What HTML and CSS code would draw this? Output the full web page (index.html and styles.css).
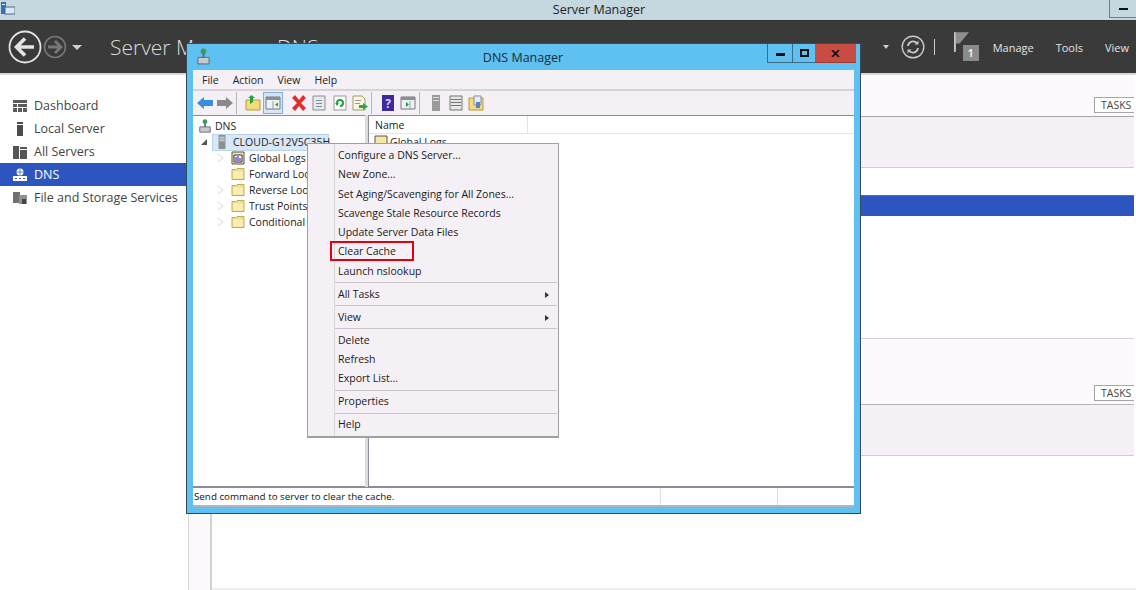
FILE: index.html
```html
<!DOCTYPE html>
<html lang="en">
<head>
<meta charset="utf-8">
<title>Server Manager</title>
<link rel="stylesheet" href="styles.css">
</head>
<body>
<div class="desktop">
  <div class="osbar">
    <svg class="osicon" viewBox="0 0 14 14"><rect x="0" y="1" width="5" height="12" fill="#2f6fc4"/><rect x="4" y="6" width="10" height="7" fill="#dfe8ee" stroke="#4a6a90"/><rect x="1" y="3" width="3" height="1" fill="#fff"/></svg>
    <span class="ostitle">Server Manager</span>
    <span class="osmin"><i></i></span>
  </div>

  <header class="smhead">
    <svg class="nav-back" viewBox="0 0 34 34"><circle cx="17" cy="17" r="15.5" fill="none" stroke="#e4e4e4" stroke-width="1.8"/><path d="M8 17h18M17 8.500 8.500 17l8.500 8.500" fill="none" stroke="#e4e4e4" stroke-width="3.600"/></svg>
    <svg class="nav-fwd" viewBox="0 0 24 24"><circle cx="12" cy="12" r="10.500" fill="none" stroke="#777" stroke-width="1.600"/><path d="M5 12h13M12 6l6 6-6 6" fill="none" stroke="#777" stroke-width="2.800"/></svg>
    <span class="caret"></span>
    <span class="crumb">Server Manager</span>
    <span class="crumb-dns">DNS</span>
    <span class="caret caret-small"></span>
    <svg class="refresh" viewBox="0 0 24 24"><circle cx="12" cy="12" r="10.800" fill="none" stroke="#c8c8c8" stroke-width="1.400"/><path d="M7 11a5 5 0 0 1 9-2.500M17 13a5 5 0 0 1-9 2.500" fill="none" stroke="#c8c8c8" stroke-width="1.800"/><path d="M17.500 5.500v4h-4zM6.500 18.500v-4h4z" fill="#c8c8c8"/></svg>
    <span class="vsep"></span>
    <span class="flag">
      <svg viewBox="0 0 16 21" class="flag-svg"><rect x="0" y="0" width="2" height="21" fill="#c8c8c8"/><path d="M2 0h14L6 12H2z" fill="#8f8f8f"/></svg>
      <span class="badge">1</span>
    </span>
    <span class="hmenu hm-manage">Manage</span>
    <span class="hmenu hm-tools">Tools</span>
    <span class="hmenu hm-view">View</span>
  </header>

  <div class="smbody">
    <aside class="side">
      <div class="nav-item"><svg class="nav-ic" viewBox="0 0 14 14"><path d="M0 1h14v3H0zM0 5h4v3H0zM5 5h9v3H5zM0 9h4v4H0zM5 9h4v4H5zM10 9h4v4h-4z" fill="#5c5c5c"/></svg>Dashboard</div>
      <div class="nav-item"><svg class="nav-ic" viewBox="0 0 14 14"><path d="M4 0h6v2H4zM4 3h6v11H4z" fill="#4c4c4c"/></svg>Local Server</div>
      <div class="nav-item"><svg class="nav-ic" viewBox="0 0 14 14"><path d="M0 1h6v13H0zM7 2h7v2H7zM7 5h7v9H7z" fill="#555"/></svg>All Servers</div>
      <div class="nav-item nav-on"><svg class="nav-ic" viewBox="0 0 14 14"><circle cx="7" cy="4" r="3.500" fill="#fff"/><path d="M7 1v6M3.500 4h7" stroke="#2d55c0" stroke-width=".7"/><path d="M0 8h14v5H0z" fill="#fff"/><path d="M2 10h2v1H2zM6 10h2v1H6zM10 10h2v1h-2z" fill="#2d55c0"/></svg>DNS</div>
      <div class="nav-item"><svg class="nav-ic" viewBox="0 0 14 14"><path d="M0 1h7v11H0z" fill="#707070"/><path d="M6 4h8v9H6z" fill="#909090"/><path d="M9 8h4v5H9z" fill="#444"/></svg>File and Storage Services<span class="nav-more"></span></div>
    </aside>
    <div class="strip"></div>
    <main class="content">
      <section class="band band-head"><span class="tasks">TASKS</span></section>
      <section class="tile"></section>
      <section class="rows">
        <div class="row-gap"></div>
        <div class="row-sel"></div>
      </section>
      <section class="band band-head band-second"><span class="tasks">TASKS</span></section>
      <section class="tile"></section>
      <section class="rest"></section>
    </main>
  </div>

  <div class="window">
    <div class="wintitle">
      <svg class="win-ic" viewBox="0 0 14 18"><circle cx="7" cy="3.500" r="3" fill="#3f9a5a"/><path d="M6 6h2v4H6z" fill="#667"/><path d="M1 10h12v7H1z" fill="#c5c9d0" stroke="#5f6670"/></svg>
      <span class="wintext">DNS Manager</span>
      <div class="winbtns">
        <span class="wb wb-min"><i></i></span>
        <span class="wb wb-max"><i></i></span>
        <span class="wb wb-close"><svg viewBox="0 0 10 8"><path d="M1 0l8 8M9 0L1 8" stroke="#111" stroke-width="2"/></svg></span>
      </div>
    </div>

    <div class="menubar"><span>File</span><span>Action</span><span>View</span><span>Help</span></div>

    <div class="toolbar">
      <span class="tb"><svg viewBox="0 0 16 16"><path d="M0 8l7-6v3h9v6H7v3z" fill="#3a8ede"/></svg></span>
      <span class="tb"><svg viewBox="0 0 16 16"><path d="M16 8L9 2v3H0v6h9v3z" fill="#8a8a8a"/></svg></span>
      <span class="tsep"></span>
      <span class="tb"><svg viewBox="0 0 16 16"><path d="M1 5h14v10H1z" fill="#f3dc7e" stroke="#b59a3c"/><path d="M5 9V3H3l3.500-3L10 3H8v4z" fill="#1fa33a"/></svg></span>
      <span class="tb tb-on"><svg viewBox="0 0 16 16"><path d="M1 2h14v12H1z" fill="#eef2f6" stroke="#777"/><path d="M1 2h14v3H1z" fill="#8a8f96"/><path d="M8 6v8" stroke="#999"/><path d="M13 7.500v4l-3-2z" fill="#1c9a3c"/></svg></span>
      <span class="tb tb-del"><svg viewBox="0 0 16 16"><path d="M1 3l3-3 4 5 4-5 3 3-5 5 5 5-3 3-4-5-4 5-3-3 5-5z" fill="#e22b2b"/></svg></span>
      <span class="tb"><svg viewBox="0 0 16 16"><path d="M2 1h12v14H2z" fill="#e8e8e8" stroke="#8f8f8f"/><path d="M5 5h6v1H5zM5 8h6v1H5zM5 11h6v1H5z" fill="#7090b8"/></svg></span>
      <span class="tb tb-ref"><svg viewBox="0 0 16 16"><path d="M2 1h12v14H2z" fill="#fff" stroke="#999"/><path d="M5 8a3 3 0 1 1 3 3" fill="none" stroke="#1fa33a" stroke-width="2"/><path d="M3 8h4l-2 3z" fill="#1fa33a"/></svg></span>
      <span class="tb"><svg viewBox="0 0 16 16"><path d="M1 1h9l3 3v11H1z" fill="#fdf8e0" stroke="#a09a70"/><path d="M3 5h6v1H3zM3 8h5v1H3z" fill="#999"/><path d="M7 10h4V8l5 3.500-5 3.500v-2H7z" fill="#2aa846"/></svg></span>
      <span class="tsep"></span>
      <span class="tb"><svg viewBox="0 0 16 16"><path d="M2 0h12v16H2z" fill="#3c2a9c"/><text x="8" y="13" class="tb-q">?</text></svg></span>
      <span class="tb"><svg viewBox="0 0 16 16"><path d="M1 2h14v12H1z" fill="#eef2f6" stroke="#777"/><path d="M1 2h14v3H1z" fill="#8a8f96"/><path d="M10 6v8" stroke="#999"/><path d="M6 7v5l3-2.500z" fill="#1c9a3c"/></svg></span>
      <span class="tsep"></span>
      <span class="tb"><svg viewBox="0 0 16 16"><path d="M4 0h8v16H4z" fill="#9a9a9a"/><path d="M5 2h6v1H5zM5 5h6v1H5z" fill="#ddd"/></svg></span>
      <span class="tb"><svg viewBox="0 0 16 16"><path d="M2 1h12v14H2z" fill="#e5e5e5" stroke="#777"/><path d="M3 4h10v1H3zM3 7h10v1H3zM3 10h10v1H3z" fill="#777"/></svg></span>
      <span class="tb"><svg viewBox="0 0 16 16"><path d="M1 3h14v12H1z" fill="#f3dc7e" stroke="#b59a3c"/><path d="M6 1h7v9H6z" fill="#e8eef6" stroke="#7f8fa8"/><path d="M8 7h4v6H8z" fill="#5f82c0"/></svg></span>
    </div>

    <div class="panes">
      <div class="tree">
        <div class="tr tr-root"><svg class="tr-ic" viewBox="0 0 14 16"><circle cx="7" cy="3" r="2.800" fill="#3f9a5a"/><path d="M6 5h2v4H6z" fill="#667"/><path d="M1 9h12v6H1z" fill="#c5c9d0" stroke="#5f6670"/></svg><span>DNS</span></div>
        <div class="tr tr-srv"><span class="exp-open"></span><span class="srv-sel"><svg class="tr-ic srv-ic" viewBox="0 0 10 16"><path d="M1 0h8v16H1z" fill="#8c9096"/><path d="M2 2h6v1H2zM2 4h6v1H2zM2 6h6v1H2z" fill="#d8dadd"/><path d="M6 13h2v2H6z" fill="#4fc04f"/></svg><span>CLOUD-G12V5C35H</span></span></div>
        <div class="tr tr-sub"><span class="exp"></span><svg class="tr-ic" viewBox="0 0 14 14"><path d="M1 1h12v12H1z" fill="#f6e7a8" stroke="#555"/><path d="M3 4h8v7H3z" fill="#fff" stroke="#333"/><path d="M5 6v4M7 5v5M9 7v3" stroke="#5030c0" stroke-width="1.200"/></svg><span>Global Logs</span></div>
        <div class="tr tr-sub"><span class="exp exp-none"></span><svg class="tr-ic" viewBox="0 0 14 13"><use href="#folder"/></svg><span>Forward Lookup Zones</span></div>
        <div class="tr tr-sub"><span class="exp"></span><svg class="tr-ic" viewBox="0 0 14 13"><use href="#folder"/></svg><span>Reverse Lookup Zones</span></div>
        <div class="tr tr-sub"><span class="exp"></span><svg class="tr-ic" viewBox="0 0 14 13"><use href="#folder"/></svg><span>Trust Points</span></div>
        <div class="tr tr-sub"><span class="exp"></span><svg class="tr-ic" viewBox="0 0 14 13"><use href="#folder"/></svg><span>Conditional Forwarders</span></div>
      </div>
      <div class="split"></div>
      <div class="detail">
        <div class="colhead"><span class="colname">Name</span></div>
        <div class="drow"><svg class="tr-ic" viewBox="0 0 14 14"><path d="M1 1h12v12H1z" fill="#f6e7a8" stroke="#555"/></svg><span>Global Logs</span></div>
      </div>
    </div>

    <div class="status">
      <span class="st-main">Send command to server to clear the cache.</span>
      <span class="st-cell st-mid"></span>
      <span class="st-cell st-end"></span>
    </div>

    <div class="ctx">
      <div class="mi">Configure a DNS Server...</div>
      <div class="mi">New Zone...</div>
      <div class="mi">Set Aging/Scavenging for All Zones...</div>
      <div class="mi">Scavenge Stale Resource Records</div>
      <div class="mi">Update Server Data Files</div>
      <div class="mi mi-mark">Clear Cache<span class="redbox"></span></div>
      <div class="mi">Launch nslookup</div>
      <div class="ms"></div>
      <div class="mi mi-sub">All Tasks</div>
      <div class="ms"></div>
      <div class="mi mi-sub">View</div>
      <div class="ms"></div>
      <div class="mi">Delete</div>
      <div class="mi">Refresh</div>
      <div class="mi">Export List...</div>
      <div class="ms"></div>
      <div class="mi">Properties</div>
      <div class="ms"></div>
      <div class="mi">Help</div>
    </div>
  </div>
</div>
<svg class="defs" width="0" height="0"><defs><g id="folder"><path d="M1 2h4l1-1h7v11H1z" fill="#f5e08e" stroke="#c4ab55"/><path d="M2 4h10v7H2z" fill="#fbeeb4"/></g></defs></svg>
</body>
</html>
```
FILE: styles.css
```css
* { box-sizing: border-box; }
html, body { margin: 0; padding: 0; background: #fff; }
body { font-family: "Open Sans", "Noto Sans", sans-serif; color: #222; }
i { display: block; }
.defs { position: absolute; }
.desktop { position: relative; width: 1136px; height: 590px; overflow: hidden; display: flex; flex-direction: column; background: #fff; }

/* OS title bar */
.osbar { height: 20px; background: #c5d7df; display: flex; align-items: center; justify-content: center; position: relative; flex: none; }
.osicon { position: absolute; left: 1px; top: 1px; width: 14px; height: 14px; }
.ostitle { font-size: 12.5px; color: #222; margin-left: 62px; line-height: 20px; }
.osmin { position: absolute; right: 0; top: 0; width: 27px; height: 18px; border: 1px solid #6d7d85; border-top: 0; border-right: 0; display: flex; align-items: center; justify-content: center; }
.osmin i { width: 9px; height: 2px; background: #111; }

/* Server Manager header */
.smhead { height: 55px; background: #3a3a3a; border-top: 1px solid #333; border-bottom: 2px solid #d8d8d8; display: flex; align-items: center; flex: none; color: #e8e8e8; }
.nav-back { width: 34px; height: 34px; margin-left: 8px; flex: none; }
.nav-fwd { width: 24px; height: 24px; margin-left: 1px; flex: none; }
.caret { width: 0; height: 0; border-left: 5px solid transparent; border-right: 5px solid transparent; border-top: 5px solid #d0d0d0; margin-left: 5px; flex: none; }
.crumb { font-size: 21px; font-weight: 300; margin-left: 28px; color: #dcdcdc; white-space: nowrap; width: 167px; flex: none; }
.crumb-dns { font-size: 21px; font-weight: 300; color: #dcdcdc; flex: none; }
.caret-small { border-left-width: 3px; border-right-width: 3px; border-top-width: 4px; margin-left: auto; }
.refresh { width: 24px; height: 24px; margin-left: 12px; flex: none; }
.vsep { width: 1px; height: 16px; background: #ccc; margin-left: 9px; flex: none; }
.flag { position: relative; width: 26px; height: 30px; margin-left: 19px; flex: none; margin-top: 0; }
.flag-svg { width: 15px; height: 20px; display: block; }
.badge { position: absolute; left: 9px; top: 13px; width: 16px; height: 16px; background: #8b8b8b; color: #eee; font-size: 10px; font-weight: 700; text-align: center; line-height: 16px; }
.hmenu { font-size: 11px; color: #e4e4e4; flex: none; }
.hm-manage { margin-left: 13px; }
.hm-tools { margin-left: 22px; }
.hm-view { margin-left: 22px; margin-right: 7px; }

/* Server Manager body */
.smbody { flex: 1; display: flex; min-height: 0; }
.side { width: 188px; flex: none; padding-top: 19px; background: #fff; }
.nav-item { height: 23px; display: flex; align-items: center; padding-left: 13px; font-size: 12.5px; color: #444; white-space: nowrap; }
.nav-ic { width: 14px; height: 14px; margin-right: 7px; flex: none; }
.nav-on { background: #2d55c0; color: #fff; }
.nav-more { width: 0; height: 0; border-left: 5px solid #444; border-top: 4px solid transparent; border-bottom: 4px solid transparent; margin-left: 8px; }
.strip { width: 24px; flex: none; background: #fdfafd; border-left: 1px solid #d8d4d8; border-right: 2px solid #d4d0d4; }
.content { flex: 1; display: flex; flex-direction: column; padding-right: 2px; border-bottom: 2px solid #f0eef0; }
.band { height: 42px; background: #fdfafd; border-bottom: 1px solid #a8a4a8; display: flex; align-items: flex-end; justify-content: flex-end; padding-bottom: 3px; flex: none; }
.band-second { height: 67px; border-top: 1px solid #d4d0d4; border-bottom-color: #b8b4b8; }
.tasks { width: 40px; height: 16px; border: 1px solid #a8a4a8; border-right: 0; background: #fff; font-size: 10.500px; line-height: 15px; color: #444; padding-left: 6px; overflow: hidden; }
.tile { height: 51px; background: #f5f0f6; border-bottom: 1px solid #d0ccd0; flex: none; }
.rows { height: 170px; background: #fff; flex: none; }
.row-gap { height: 27px; }
.row-sel { height: 21px; background: #2d55c0; border-top: 1px solid #4a6dcc; }
.rest { flex: 1; background: #fff; }

/* DNS window */
.window { position: absolute; left: 186px; top: 43px; width: 675px; height: 471px; background: #5fc1f1; border: 1px solid #3a4a55; padding: 0 6px 6px; display: flex; flex-direction: column; }
.wintitle { height: 26px; display: flex; align-items: center; justify-content: center; position: relative; flex: none; }
.win-ic { position: absolute; left: 4px; top: 4px; width: 13px; height: 17px; }
.wintext { font-size: 12.500px; color: #1c2a36; margin-left: -1px; }
.winbtns { position: absolute; top: 0; right: -2px; display: flex; height: 19px; }
.wb { display: flex; align-items: center; justify-content: center; height: 19px; border-bottom: 1px solid #3c6c88; }
.wb-min { width: 25px; border-left: 1px solid #3c6c88; }
.wb-min i { width: 9px; height: 3px; background: #111; margin-top: 3px; }
.wb-max { width: 23px; border-left: 1px solid #3c6c88; }
.wb-max i { width: 9px; height: 8px; border: 2px solid #111; }
.wb-close { width: 41px; background: #c94c43; border-bottom-color: #a03a33; }
.wb-close svg { width: 9px; height: 7px; }
.menubar { height: 21px; background: #f5f0f6; border-bottom: 2px solid #d6d2d8; display: flex; align-items: center; padding-left: 2px; font-size: 10.500px; color: #222; flex: none; }
.menubar span { padding: 0 7px; }
.toolbar { height: 24px; background: #f5f0f6; display: flex; align-items: center; flex: none; padding-left: 2px; }
.tb { width: 20px; height: 22px; display: flex; align-items: center; justify-content: center; flex: none; }
.tb svg { width: 16px; height: 16px; }
.tb-on { background: #d5e6f7; border: 1px solid #7fb0e0; margin-right: 1px; }
.tb-del { margin-left: 5px; }
.tb-ref { margin-left: 1px; }
.tb-q { font-size: 12px; font-weight: 700; fill: #d8d0ff; text-anchor: middle; }
.tsep { width: 8px; height: 22px; flex: none; position: relative; background: linear-gradient(to right, transparent 1px, #b8b4b8 1px, #b8b4b8 2px, transparent 2px); }
.panes { flex: 1; min-height: 0; display: flex; background: #f5f0f6; }
.tree { width: 172px; flex: none; background: #fff; border-top: 1px solid #8f8a9a; border-bottom: 1px solid #8f8a9a; font-size: 10.500px; padding-top: 1px; overflow: hidden; }
.split { width: 3px; flex: none; background: #dedae0; }
.detail { flex: 1; min-width: 0; background: #fff; border-top: 1px solid #8f8a9a; border-bottom: 1px solid #8f8a9a; border-left: 1px solid #8f8a9a; font-size: 10.500px; }
.tr { height: 16px; display: flex; align-items: center; white-space: nowrap; color: #222; }
.tr-ic { width: 14px; height: 14px; flex: none; }
.tr-root { padding-left: 5px; height: 17px; }
.tr-root span { margin-left: 3px; }
.tr-srv { padding-left: 8px; }
.exp-open { width: 0; height: 0; border-right: 6px solid #555; border-top: 6px solid transparent; margin-right: 5px; flex: none; }
.srv-sel { height: 17px; width: 117px; display: flex; align-items: center; background: #d9e8f7; border: 1px solid #b8d4f0; padding-left: 4px; }
.srv-ic { width: 10px; }
.srv-sel span { margin-left: 6px; }
.tr-sub { padding-left: 25px; }
.tr-sub span:last-child { margin-left: 4px; }
.exp { width: 0; height: 0; border-left: 5px solid #fff; border-top: 4px solid transparent; border-bottom: 4px solid transparent; margin-right: 8px; flex: none; filter: drop-shadow(0 0 .6px #444); }
.exp-none { filter: none; border-left-color: transparent; }
.colhead { height: 18px; border-bottom: 1px solid #e8e6e8; padding-left: 1px; }
.colname { display: block; width: 158px; height: 17px; border-right: 1px solid #e4e2e4; padding-left: 5px; line-height: 18px; color: #222; }
.drow { height: 16px; display: flex; align-items: center; padding-left: 5px; }
.drow span { margin-left: 2px; }
.status { height: 20px; background: #fff; border-top: 1px solid #8f8a9a; border-bottom: 2px solid #b0b4bc; display: flex; align-items: center; font-size: 9.800px; color: #111; flex: none; }
.st-main { width: 467px; padding-left: 1px; white-space: nowrap; }
.st-cell { height: 100%; border-left: 1px solid #e0dee0; }
.st-mid { width: 117px; }
.st-end { flex: 1; }

/* Context menu */
.ctx { position: absolute; left: 120px; top: 99px; width: 252px; height: 295px; background-color: #f5f0f6; background-image: linear-gradient(to right, transparent 26px, #d8d4d8 26px, #d8d4d8 27px, transparent 27px); border: 1px solid #a0a0a0; border-bottom-width: 2px; padding-top: 2px; font-size: 10.500px; color: #1a1a1a; z-index: 2; }
.mi { height: 19.250px; line-height: 19px; padding-left: 30px; position: relative; white-space: nowrap; }
.ms { height: 3.750px; margin-left: 27px; margin-right: 1px; border-top: 1px solid #c8c4c8; margin-top: 1.500px; margin-bottom: -1.500px; }
.mi-sub::after { content: ""; position: absolute; right: 9px; top: 7px; width: 0; height: 0; border-left: 4px solid #333; border-top: 3px solid transparent; border-bottom: 3px solid transparent; }
.redbox { position: absolute; left: 22px; top: -1px; width: 84px; height: 20px; border: 2px solid #e2000f; }
```
